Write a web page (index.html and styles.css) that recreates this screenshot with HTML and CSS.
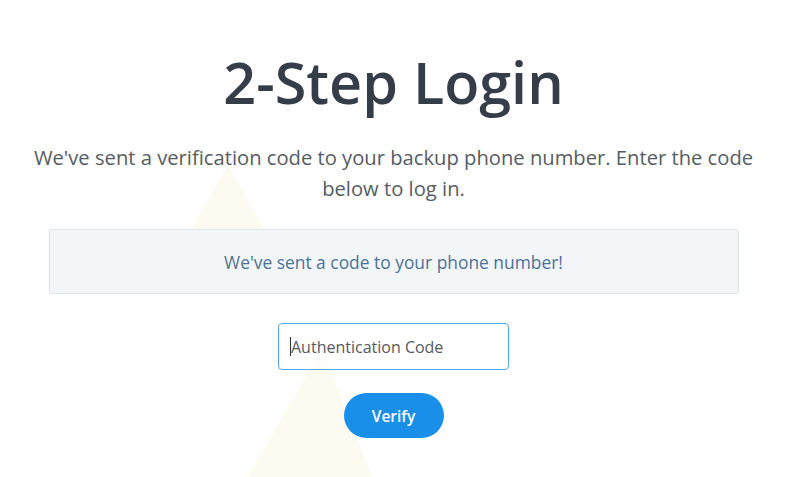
FILE: index.html
```html
<!DOCTYPE html>
<html>
<head>
<meta charset="utf-8">
<link rel="stylesheet" href="styles.css">
</head>
<body>
<div class="bg" aria-hidden="true">
  <svg width="800" height="477" viewBox="0 0 800 477">
    <polygon points="228,165 190,232 266,232" fill="#fcfaf1"/>
    <polygon points="322,348 248,477 372,477" fill="#fcfaf1"/>
  </svg>
</div>
<main class="page">
  <h1 class="title">2-Step Login</h1>
  <p class="lead">We've sent a verification code to your backup phone number. Enter the code below to log in.</p>
  <div class="notice">We've sent a code to your phone number!</div>
  <form class="form">
    <div class="field"><span class="caret"></span><span class="placeholder">Authentication Code</span></div>
    <button type="button" class="btn">Verify</button>
  </form>
</main>
</body>
</html>
```
FILE: styles.css
```css
html, body {
  margin: 0;
  padding: 0;
  background: #fff;
}
body {
  font-family: "Open Sans", "Noto Sans", sans-serif;
  width: 800px;
  height: 477px;
  overflow: hidden;
  position: relative;
}
.bg {
  position: absolute;
  inset: 0;
  z-index: 0;
}
.bg svg { display: block; }
.page {
  position: relative;
  z-index: 1;
  width: 787px;
  display: flex;
  flex-direction: column;
  align-items: center;
  padding-top: 44px;
}
.title {
  margin: 0;
  font-size: 57.5px;
  font-weight: 600;
  line-height: 76px;
  color: #343d48;
  letter-spacing: 0;
}
.lead {
  margin: 22px 0 0;
  width: 740px;
  text-align: center;
  font-size: 20.2px;
  line-height: 31px;
  color: #575c63;
}
.notice {
  margin-top: 25px;
  width: 690px;
  height: 65px;
  box-sizing: border-box;
  display: flex;
  align-items: center;
  justify-content: center;
  background: #f3f6f9;
  border: 1px solid #dce3ea;
  border-radius: 3px;
  font-size: 17.4px;
  color: #4e7296;
}
.form {
  display: flex;
  flex-direction: column;
  align-items: center;
  margin-top: 29px;
}
.field {
  width: 231px;
  height: 47px;
  box-sizing: border-box;
  border: 1px solid #4da9ef;
  border-radius: 4px;
  display: flex;
  align-items: center;
  padding-left: 11px;
  background: rgba(255,255,255,0.6);
}
.caret {
  width: 1px;
  height: 19px;
  background: #333;
}
.placeholder {
  font-size: 16px;
  color: #555a60;
}
.btn {
  margin-top: 23px;
  width: 100px;
  height: 45px;
  border: none;
  border-radius: 23px;
  background: #1a8fea;
  color: #fff;
  font-family: "Open Sans", "Noto Sans", sans-serif;
  font-size: 15.5px;
  font-weight: 600;
  padding: 0;
}
```
